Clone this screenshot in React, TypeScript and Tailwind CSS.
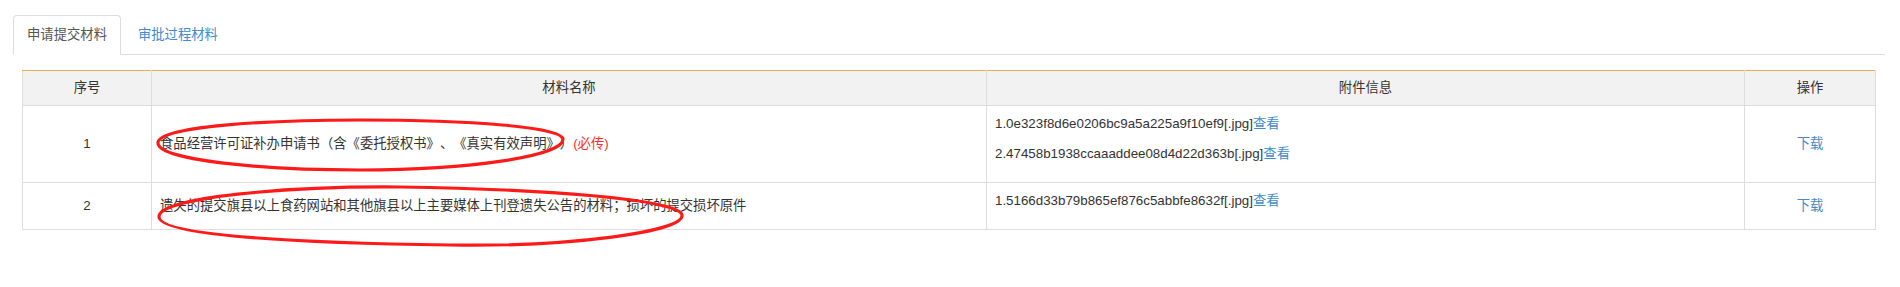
import { type ReactNode } from 'react';

const font = { fontFamily: '"Liberation Sans", "Noto Sans CJK SC", sans-serif' };

interface Row {
    no: number;
    name: ReactNode;
    files: string[];
}

const rows: Row[] = [
    {
        no: 1,
        name: (
            <>
                食品经营许可证补办申请书（含《委托授权书》、《真实有效声明》）
                <span className="text-[#ff3030]">(必传)</span>
            </>
        ),
        files: ['1.0e323f8d6e0206bc9a5a225a9f10ef9[.jpg]', '2.47458b1938ccaaaddee08d4d22d363b[.jpg]'],
    },
    {
        no: 2,
        name: '遗失的提交旗县以上食药网站和其他旗县以上主要媒体上刊登遗失公告的材料；损坏的提交损坏原件',
        files: ['1.5166d33b79b865ef876c5abbfe8632f[.jpg]'],
    },
];

export default function App() {
    return (
        <div
            className="relative min-h-[287px] bg-white pt-[15px] pl-[13px] pr-[15px] text-[13.33px] leading-[20px] text-[#333] [text-spacing-trim:space-all]"
            style={font}
        >
            {/* Tabs */}
            <ul className="flex border-b border-[#ddd]">
                <li className="-mb-px">
                    <a className="block rounded-t-[4px] border border-[#ddd] border-b-white bg-white px-[13px] py-[9px] text-[#555]">
                        申请提交材料
                    </a>
                </li>
                <li className="-mb-px ml-[3px]">
                    <a className="block rounded-t-[4px] border border-transparent px-[13px] py-[9px] text-[#428bca]">
                        审批过程材料
                    </a>
                </li>
            </ul>

            {/* Tab content */}
            <div className="pt-[15px] pl-[9px] pr-[10px]">
                <table className="w-full table-fixed border-collapse">
                    <colgroup>
                        <col className="w-[129px]" />
                        <col className="w-[835px]" />
                        <col className="w-[758px]" />
                        <col className="w-[131px]" />
                    </colgroup>
                    <thead>
                        <tr className="bg-[#f2f2f2]">
                            {['序号', '材料名称', '附件信息', '操作'].map((h) => (
                                <th
                                    key={h}
                                    className="border-x border-b border-t border-x-[#ddd] border-b-[#ddd] border-t-[#f0ad4e] px-[8px] py-[7px] text-center font-normal"
                                >
                                    {h}
                                </th>
                            ))}
                        </tr>
                    </thead>
                    <tbody>
                        {rows.map((r) => (
                            <tr key={r.no}>
                                <td className="border border-[#ddd] p-[8px] text-center align-middle">{r.no}</td>
                                <td className="border border-[#ddd] p-[8px] align-middle">{r.name}</td>
                                <td className="border border-[#ddd] p-[8px] align-middle">
                                    {r.files.map((f) => (
                                        <p key={f} className="mb-[10px]">
                                            {f}
                                            <a className="text-[#428bca]">查看</a>
                                        </p>
                                    ))}
                                </td>
                                <td className="border border-[#ddd] p-[8px] text-center align-middle">
                                    <a className="text-[#428bca]">下载</a>
                                </td>
                            </tr>
                        ))}
                    </tbody>
                </table>
            </div>

            {/* Hand-drawn red annotation marks */}
            <svg
                className="pointer-events-none absolute inset-0"
                width="1900"
                height="287"
                viewBox="0 0 1900 287"
                fill="none"
            >
                <path
                    d="M158,143 C157,126 270,120 360,120 C470,120 562,127 563,139 C564,156 470,170 360,170 C260,170 158,160 158,143 Z"
                    stroke="#ff1a1a"
                    strokeWidth="3.2"
                />
                <path
                    d="M159,217 C158,197 290,186 400,187 C540,189 680,199 682,215 C684,232 570,247 450,245 C300,243 160,236 159,217 Z"
                    stroke="#ff1a1a"
                    strokeWidth="3.2"
                />
            </svg>
        </div>
    );
}
